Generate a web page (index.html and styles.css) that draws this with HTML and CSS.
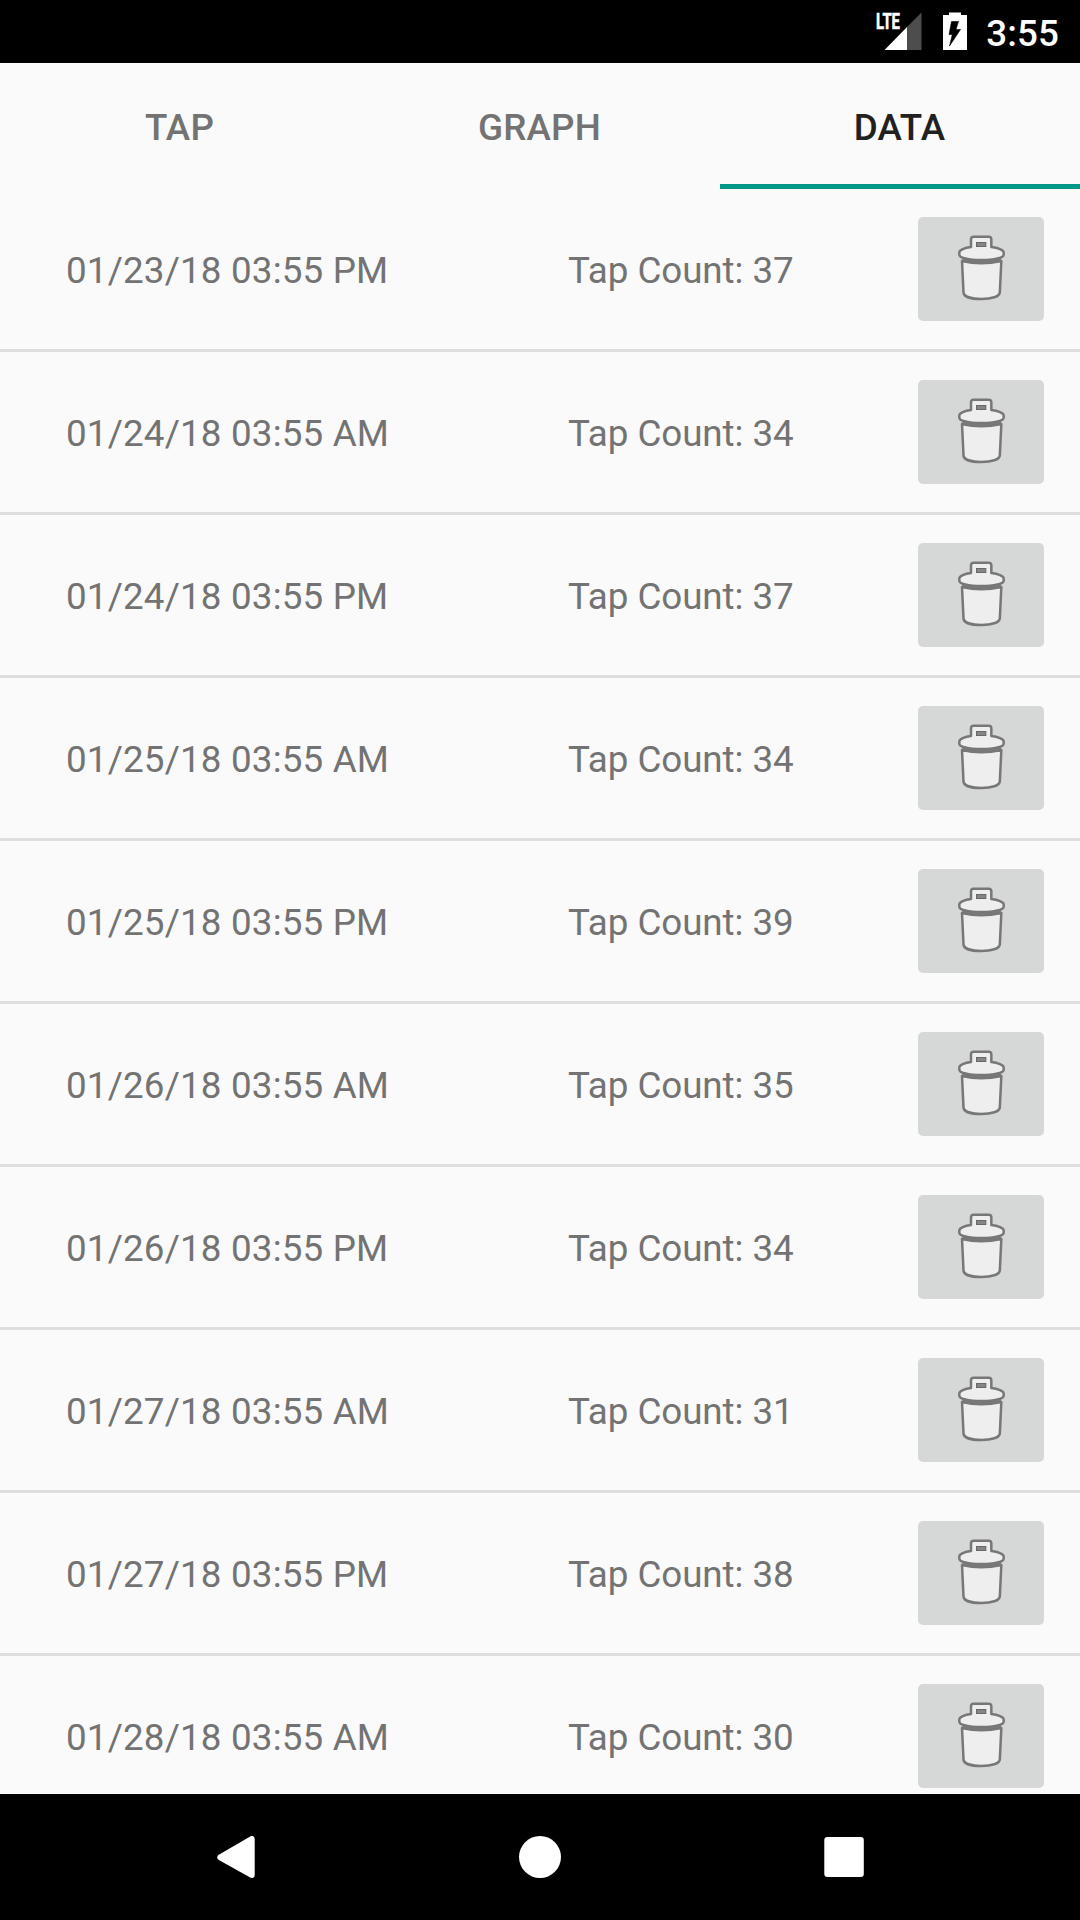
FILE: index.html
```html
<!DOCTYPE html>
<html lang="en">
<head>
<meta charset="utf-8">
<title>Tap Data</title>
<link rel="stylesheet" href="styles.css">
</head>
<body>
<svg class="sprite" aria-hidden="true">
  <symbol id="trash" viewBox="54 36 378 312">
    <path class="trash-band" d="M186 160 L188 170 Q244 182 302 170 L304 160 Z"/>
    <path class="trash-part" d="M186 168 Q215 175 244 175 T304 168 L299.500 262 C299 275 274 282 244 282 S191 275 190.500 262 Z"/>
    <path class="trash-part" d="M213 126 V103 Q213 95 221 95 H266 Q274 95 274 103 V126 C294 128 311 135 311 142 V149 C311 158 283 165 244 165 S178 158 178 149 V142 C178 135 194 128 213 126 Z"/>
    <rect class="trash-slot" x="229.500" y="112.500" width="28" height="12"/>
  </symbol>
</svg>
<div class="screen">
  <header class="status">
    <svg class="status-icons" viewBox="870 0 100 63">
      <text class="lte" x="876" y="29" textLength="24" lengthAdjust="spacingAndGlyphs">LTE</text>
      <path class="signal-off" d="M907 27 L921.500 12.500 V50 H907 Z"/>
      <path class="signal-on" d="M884.500 50 L907 27 V50 Z"/>
      <path class="battery" d="M949 12.500 H961 V15 H967 V50 H943 V15 H949 Z"/>
      <path class="bolt" d="M951.500 21.500 H958.500 L956 29.500 H960.500 L949.500 46 L952.300 34.500 H949 Z"/>
    </svg>
    <span class="clock">3:55</span>
  </header>
  <nav class="tabs">
    <div class="tab">TAP</div>
    <div class="tab">GRAPH</div>
    <div class="tab active">DATA</div>
  </nav>
  <main class="list">
    <div class="row"><span class="date">01/23/18 03:55 PM</span><span class="count">Tap Count: 37</span><button class="delete" aria-label="Delete"><svg><use href="#trash"/></svg></button></div>
    <div class="row"><span class="date">01/24/18 03:55 AM</span><span class="count">Tap Count: 34</span><button class="delete" aria-label="Delete"><svg><use href="#trash"/></svg></button></div>
    <div class="row"><span class="date">01/24/18 03:55 PM</span><span class="count">Tap Count: 37</span><button class="delete" aria-label="Delete"><svg><use href="#trash"/></svg></button></div>
    <div class="row"><span class="date">01/25/18 03:55 AM</span><span class="count">Tap Count: 34</span><button class="delete" aria-label="Delete"><svg><use href="#trash"/></svg></button></div>
    <div class="row"><span class="date">01/25/18 03:55 PM</span><span class="count">Tap Count: 39</span><button class="delete" aria-label="Delete"><svg><use href="#trash"/></svg></button></div>
    <div class="row"><span class="date">01/26/18 03:55 AM</span><span class="count">Tap Count: 35</span><button class="delete" aria-label="Delete"><svg><use href="#trash"/></svg></button></div>
    <div class="row"><span class="date">01/26/18 03:55 PM</span><span class="count">Tap Count: 34</span><button class="delete" aria-label="Delete"><svg><use href="#trash"/></svg></button></div>
    <div class="row"><span class="date">01/27/18 03:55 AM</span><span class="count">Tap Count: 31</span><button class="delete" aria-label="Delete"><svg><use href="#trash"/></svg></button></div>
    <div class="row"><span class="date">01/27/18 03:55 PM</span><span class="count">Tap Count: 38</span><button class="delete" aria-label="Delete"><svg><use href="#trash"/></svg></button></div>
    <div class="row"><span class="date">01/28/18 03:55 AM</span><span class="count">Tap Count: 30</span><button class="delete" aria-label="Delete"><svg><use href="#trash"/></svg></button></div>
  </main>
  <footer class="navbar">
    <svg class="nav-icon" viewBox="0 0 42 42"><path class="back" d="M5.300 21.300 L36.700 3 V39 Z"/></svg>
    <svg class="nav-icon" viewBox="0 0 42 42"><circle cx="21" cy="21" r="21"/></svg>
    <svg class="nav-icon" viewBox="0 0 42 42"><rect x="1.300" y="1" width="39.500" height="40" rx="3"/></svg>
  </footer>
</div>
</body>
</html>
```
FILE: styles.css
```css
* { box-sizing: border-box; }

body {
  margin: 0;
  background: #fafafa;
  font-family: Roboto, "Liberation Sans", sans-serif;
  font-size: 36.75px;
  color: #737373;
}

.sprite { display: none; }

.screen {
  display: flex;
  flex-direction: column;
  width: 1080px;
  height: 1920px;
  overflow: hidden;
}

.status {
  display: flex;
  flex: none;
  align-items: center;
  justify-content: flex-end;
  gap: 16px;
  height: 63px;
  padding-right: 21px;
  background: #000;
  color: #fff;
}

.status-icons { width: 100px; height: 63px; }
.lte { font-size: 21.500px; font-weight: 700; fill: #fff; stroke: #fff; stroke-width: 0.6px; }
.signal-off { fill: #4d4d4d; }
.signal-on, .battery { fill: #fff; }
.bolt { fill: #000; stroke: #000; stroke-width: 0.6px; }
.clock { font-weight: 500; line-height: 43px; padding-top: 3px; letter-spacing: 0.1px; }

.tabs {
  display: grid;
  grid-template-columns: repeat(3, 1fr);
  flex: none;
  height: 126px;
}

.tab {
  display: flex;
  align-items: center;
  justify-content: center;
  padding-top: 7px;
  padding-right: 1px;
  border-bottom: 5px solid transparent;
  font-weight: 500;
  letter-spacing: 0.2px;
}

.tab.active { color: #212121; border-color: #009688; }

.list { flex: 1; min-height: 0; overflow: hidden; }

.row {
  display: grid;
  grid-template-columns: 502px 349px 126px;
  align-items: center;
  height: 163px;
  padding-left: 66px;
  border-bottom: 3px solid #dedede;
  white-space: nowrap;
}

.date, .count { padding-top: 2px; }
.date { letter-spacing: 0.18px; }
.count { letter-spacing: -0.06px; }

.delete {
  width: 126px;
  height: 104px;
  margin-left: 1px;
  padding: 0;
  border: 0;
  border-radius: 5px;
  background: #d6d7d7;
}

.delete svg { display: block; width: 126px; height: 104px; }
.trash-part { fill: #eee; stroke: #777; stroke-width: 7.500px; stroke-linejoin: round; }
.trash-band { fill: #7c7c7c; }
.trash-slot { fill: #858585; stroke: #686868; stroke-width: 3px; }

.navbar {
  display: grid;
  grid-template-columns: repeat(3, 304px);
  flex: none;
  align-items: center;
  justify-content: center;
  justify-items: center;
  height: 126px;
  background: #000;
}

.nav-icon { width: 42px; height: 42px; fill: #fff; }
.back { stroke: #fff; stroke-width: 6px; stroke-linejoin: round; }
```
